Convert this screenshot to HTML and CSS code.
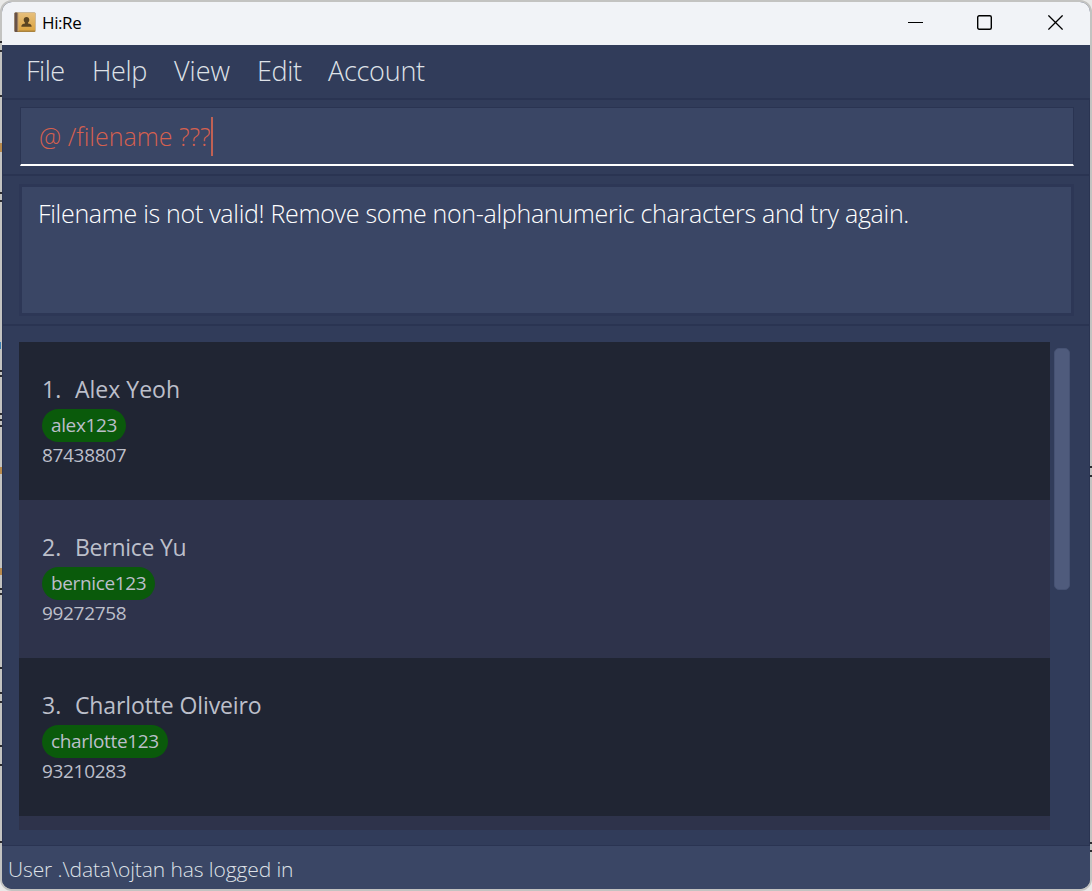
FILE: index.html
```
<!DOCTYPE html>
<html lang="en">
<head>
<meta charset="utf-8">
<title>Hi:Re</title>
<link rel="stylesheet" href="styles.css">
</head>
<body>
<div class="desktop">
<div class="window">
  <header class="titlebar">
    <svg class="app-icon" width="22" height="21" viewBox="0 0 22 21">
      <defs><linearGradient id="cover" x1="0" y1="0" x2="0" y2="1"><stop offset="0" stop-color="#e6bf7c"/><stop offset="1" stop-color="#dca441"/></linearGradient></defs>
      <rect x="0.5" y="0.5" width="21" height="19.5" rx="1" fill="#a9823f"/>
      <rect x="4" y="1" width="17" height="17.5" fill="url(#cover)"/>
      <rect x="0.5" y="0.5" width="3.2" height="19.5" rx="1" fill="#67524a"/>
      <rect x="3.6" y="1" width="1" height="18" fill="#c9a878"/>
      <path d="M12.500 5c1.700 0 2.800 1.100 2.800 2.800 0 1.300-.6 2.200-1.300 2.900v.9c1.800.4 3.700.8 3.700 3.200H7.300c0-2.400 1.900-2.800 3.700-3.200v-.9c-.7-.7-1.300-1.600-1.300-2.900C9.700 6.100 10.800 5 12.500 5z" fill="#5c4522"/>
    </svg>
    <span class="title">Hi:Re</span>
    <div class="controls">
      <svg width="15" height="16" viewBox="0 0 15 16"><path d="M0 7.500h15" stroke="#000" stroke-width="1"/></svg>
      <svg width="15" height="16" viewBox="0 0 15 16"><rect x=".7" y=".7" width="13.600" height="13.600" rx="1.500" fill="none" stroke="#000" stroke-width="1.400"/></svg>
      <svg width="15" height="16" viewBox="0 0 15 16"><path d="M.4.400l14.200 14.200M14.600.400L.4 14.600" stroke="#000" stroke-width="1.300"/></svg>
    </div>
  </header>
  <nav class="menu">
    <span class="w-file">File</span><span class="w-help">Help</span><span class="w-view">View</span><span class="w-edit">Edit</span><span class="w-account">Account</span>
  </nav>
  <section class="pane command-pane">
    <div class="command"><span>@ /filename ???</span><i class="caret"></i></div>
  </section>
  <section class="pane result-pane">
    <div class="result"><span>Filename is not valid! Remove some non-alphanumeric characters and try again.</span></div>
  </section>
  <main class="pane list-pane">
    <div class="list">
      <article class="card"><h2><span class="num">1.</span><span>Alex Yeoh</span></h2><span class="tag">alex123</span><p>87438807</p></article>
      <article class="card"><h2><span class="num">2.</span><span class="n2">Bernice Yu</span></h2><span class="tag">bernice123</span><p>99272758</p></article>
      <article class="card"><h2><span class="num">3.</span><span class="n3">Charlotte Oliveiro</span></h2><span class="tag">charlotte123</span><p>93210283</p></article>
      <article class="card"></article>
    </div>
    <div class="scroll"><div class="thumb"></div></div>
  </main>
  <footer class="status"><span>User .\data\ojtan has logged in</span></footer>
</div>
<!-- slivers of the document behind the window -->
<svg class="behind" width="1092" height="891" viewBox="0 0 1092 891">
  <path d="M1 41v2M1 50v2M1 95v2M1 192v2M1 200v2M1 370v2M1 375v2M1 413v2M1 419v2M1 425v2M1 588v2M1 593v2M1 667v2M1 692v2M1 701v2M1 745v2M1 764v2M1 841v2M1091 466v2M1091 475v2M1091 842v2M1091 850v2" stroke="#2c2c30" stroke-width="2" fill="none"/>
  <path d="M1 143v9M1 467v7M1 568v7" stroke="#b98a4c" stroke-width="2"/>
  <path d="M.5 342v7" stroke="#3b7fb4" stroke-width="1"/>
</svg>
</div>
</body>
</html>
```
FILE: styles.css
```
* { box-sizing: border-box; }
body { margin: 0; font-family: "Open Sans", "Noto Sans", sans-serif; }
h2, p { margin: 0; font-weight: 400; }
span { white-space: nowrap; }
.desktop {
  position: relative; width: 1092px; height: 891px; overflow: hidden; background: #e9e9e8;
}
.behind { position: absolute; left: 0; top: 0; pointer-events: none; }
.window {
  width: 1092px; height: 891px; border: 2px solid #c3c3c1; border-radius: 12px;
  background: #313c5a; overflow: hidden; display: flex; flex-direction: column;
}
.titlebar {
  height: 43px; flex: none; background: #f1f3f7; color: #000;
  display: flex; align-items: center; padding: 0 0 2px 12px;
}
.title { font-size: 17px; letter-spacing: -0.4px; margin-left: 6px; }
.controls { margin-left: auto; display: flex; gap: 55px; padding-right: 27px; }
.controls svg { display: block; }
.controls svg:nth-child(2) { margin: 0 1px 0 -1px; }
.menu {
  height: 53px; flex: none; padding-left: 24px; display: flex;
  font-size: 27px; font-weight: 300; line-height: 51px; color: #dfe2e8;
}
.w-file { width: 66px; letter-spacing: -0.5px; }
.w-help { width: 82px; letter-spacing: -0.4px; }
.w-view { width: 83px; }
.w-edit { width: 71px; letter-spacing: -0.4px; }
.w-account { width: 110px; letter-spacing: -0.25px; }
.pane { border: 1px solid #2a3452; border-width: 2px 1px 0; flex: none; }
.command-pane { height: 76px; padding: 7px 15px 0 17px; }
.command {
  height: 59px; background: #3a4665; border: 1px solid #2a3452; border-bottom: 2px solid #fff;
  padding-left: 18px; display: flex; align-items: center;
  font-size: 25px; font-weight: 300; color: #d5604f;
}
.caret { width: 2px; height: 39px; background: #c06154; }
.result-pane { height: 150px; padding: 8px 15px 0 16px; }
.result {
  height: 132px; background: #3a4665; border: 3px solid #2d3756;
  padding: 8px 0 0 16px; font-size: 25px; line-height: 36px; font-weight: 300; color: #fff;
  letter-spacing: -0.3px;
}
.list-pane { height: 521px; padding: 16px 18px 0 16px; display: flex; }
.list { width: 1031px; height: 488px; overflow: hidden; }
.card { height: 158px; padding: 29px 0 0 23px; background: #202533; color: #bcbfca; }
.card:nth-child(even) { background: #2e334b; }
.card h2 { font-size: 23px; line-height: 36px; display: flex; }
.num { width: 33px; }
.n2 { letter-spacing: -0.25px; }
.n3 { letter-spacing: -0.12px; }
.tag {
  display: flex; width: max-content; height: 33px; margin-top: 2px; padding: 0 9px; border-radius: 17px;
  background: #0a5a0b; font-size: 19px; line-height: 32px; letter-spacing: -0.37px;
}
.card p { font-size: 19px; line-height: 27px; letter-spacing: -0.33px; }
.scroll { padding: 6px 0 0 4px; }
.thumb { width: 16px; height: 242px; border-radius: 5px; background: #4f5b7c; border: 1px solid #465273; }
.status {
  flex: 1; background: #3a4665; border-top: 1px solid #2a3452; padding-left: 6px;
  font-size: 21px; line-height: 46px; font-weight: 300; color: #dfe2e8; letter-spacing: -0.1px;
}
```
